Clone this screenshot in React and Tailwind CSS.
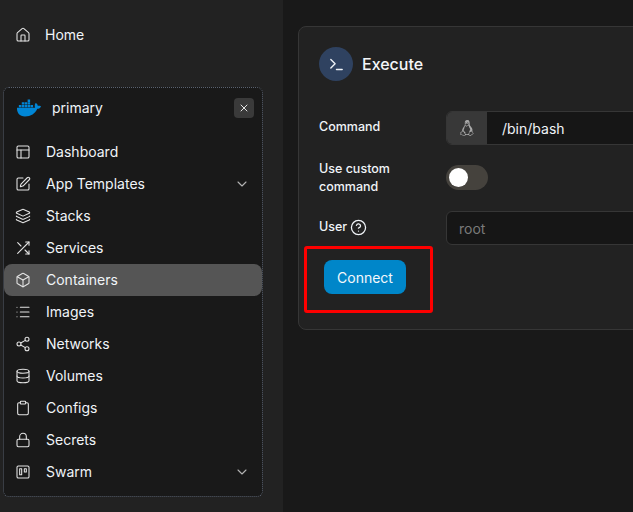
import React from 'react';
import {
  House, PanelsTopLeft, SquarePen, Layers, Box, List, Share2, Database,
  Clipboard, Lock, Trello, ChevronDown, X, Terminal, CircleHelp,
} from 'lucide-react';
import { FaDocker } from 'react-icons/fa';
import { VscTerminalLinux } from 'react-icons/vsc';

// straight-line shuffle, lucide's current one has curved strokes
function ShuffleIcon({ size, strokeWidth, className }) {
  return (
    <svg width={size} height={size} viewBox="0 0 24 24" fill="none" stroke="currentColor" strokeWidth={strokeWidth} strokeLinecap="round" strokeLinejoin="round" className={className}>
      <path d="M16 3h5v5" />
      <path d="M4 20 21 3" />
      <path d="M21 16v5h-5" />
      <path d="m15 15 6 6" />
      <path d="m4 4 5 5" />
    </svg>
  );
}

const navItems = [
  { label: 'Dashboard', icon: PanelsTopLeft },
  { label: 'App Templates', icon: SquarePen, caret: true },
  { label: 'Stacks', icon: Layers },
  { label: 'Services', icon: ShuffleIcon },
  { label: 'Containers', icon: Box, active: true },
  { label: 'Images', icon: List },
  { label: 'Networks', icon: Share2 },
  { label: 'Volumes', icon: Database },
  { label: 'Configs', icon: Clipboard },
  { label: 'Secrets', icon: Lock },
  { label: 'Swarm', icon: Trello, caret: true },
];

function NavRow({ item }) {
  const Icon = item.icon;
  return (
    <div className={`flex h-8 items-center rounded-lg pl-[11px] pr-[12px] ${item.active ? 'bg-[#555555]' : ''}`}>
      <Icon size={16} strokeWidth={1.6} className="shrink-0 text-[#e4e4e4]" />
      <span className="ml-[15px] flex-1 pb-[2px] text-[14px] text-[#f0f4f8]">{item.label}</span>
      {item.caret && <ChevronDown size={16} strokeWidth={1.6} className="text-[#b4b4b4]" />}
    </div>
  );
}

function Sidebar() {
  return (
    <div className="h-full w-[283px] shrink-0 bg-[#222222]">
      <div className="flex h-[87px] pl-[15px] pt-[19px]">
        <div className="flex h-8 items-center">
          <House size={16} strokeWidth={1.6} className="text-[#e4e4e4]" />
          <span className="ml-[14px] pb-[2px] text-[14px] text-[#f0f4f8]">Home</span>
        </div>
      </div>
      <div className="ml-[3px] h-[410px] w-[260px] rounded-md border border-dotted border-[#5a6270] bg-[#191919]">
        <div className="flex h-[40px] items-center pl-[13px] pr-[8px]">
          <FaDocker size={24} className="text-[#0086d6]" />
          <span className="ml-[11px] flex-1 pb-[2px] text-[14px] text-[#f0f4f8]">primary</span>
          <div className="flex h-5 w-5 items-center justify-center rounded bg-[#3a3a3a]">
            <X size={12} className="text-[#e4e4e4]" />
          </div>
        </div>
        <div className="mt-[8px]">
          {navItems.map((item) => (
            <NavRow key={item.label} item={item} />
          ))}
        </div>
      </div>
    </div>
  );
}

function Row({ label, className, labelClass = '', children }) {
  return (
    <div className={`flex items-center ${className}`}>
      <div className={`w-[127px] shrink-0 text-[12.5px] font-medium leading-[18px] text-[#f0f4f8] ${labelClass}`}>{label}</div>
      {children}
    </div>
  );
}

function ExecuteCard() {
  return (
    <div className="w-[420px] rounded-lg border border-[#363636] bg-[#222222] px-5 pb-[35px] pt-5">
      <div className="flex items-center">
        <div className="flex h-[34px] w-[34px] items-center justify-center rounded-full bg-[#2f4260]">
          <Terminal size={17} className="text-[#eef2f6]" />
        </div>
        <span className="ml-[9px] text-[16px] font-medium text-[#f4f6f8]">Execute</span>
      </div>
      <Row label="Command" labelClass="pb-[2px]" className="mt-[30px]">
        <div className="flex h-[34px] flex-1 overflow-hidden rounded-md border border-[#363636] bg-[#161616]">
          <div className="flex w-[40px] items-center justify-center bg-[#383838] pr-[1px]">
            <VscTerminalLinux size={16} className="text-[#a8a8a8]" />
          </div>
          <span className="flex items-center pl-[15px] text-[14px] text-[#f0f4f8]">/bin/bash</span>
        </div>
      </Row>
      <Row label={<>Use custom<br />command</>} className="mt-[15px]">
        <div className="mb-[2px] flex h-[25px] w-[42px] items-center rounded-full bg-[#45423d] pl-[3px]">
          <div className="h-[19px] w-[19px] rounded-full bg-white" />
        </div>
      </Row>
      <Row label={<span className="flex items-center gap-[3px]">User <CircleHelp size={17} strokeWidth={1.8} /></span>} labelClass="pb-[2px]" className="mt-[15px]">
        <div className="flex h-[34px] flex-1 items-center rounded-md border border-[#363636] bg-[#161616] pl-[12px] text-[14px] text-[#7a7a7a]">
          root
        </div>
      </Row>
      <button className="ml-[5px] mt-[15px] flex h-[34px] w-[82px] items-center justify-center rounded-lg bg-[#0086c9] text-[14px] text-[#f4f8fb]">
        Connect
      </button>
    </div>
  );
}

export default function App() {
  return (
    <div className="relative flex h-[512px] w-[633px] overflow-hidden bg-[#191919] font-['Inter',sans-serif]">
      <Sidebar />
      <div className="pl-[15px] pt-[26px]">
        <ExecuteCard />
      </div>
      {/* red annotation drawn over the screenshot */}
      <div className="absolute left-[304px] top-[246px] h-[67px] w-[129px] rounded-[3px] border-[3px] border-[#fe0000]" />
    </div>
  );
}
